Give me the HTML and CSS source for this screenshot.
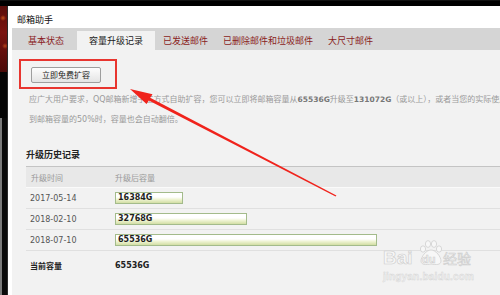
FILE: index.html
```html
<!DOCTYPE html>
<html lang="zh-CN">
<head>
<meta charset="utf-8">
<title>邮箱助手</title>
<link rel="stylesheet" href="styles.css">
</head>
<body>
<div class="page">
  <div class="topline"></div>
  <div class="main">
    <div class="sidebar">
      <div class="deco"></div>
      <div class="dark"></div>
      <div class="lower"></div>
    </div>
    <div class="panel">
      <div class="title">邮箱助手</div>
      <nav class="tabs">
        <span class="tab first">基本状态</span>
        <span class="tab active">容量升级记录</span>
        <span class="tab">已发送邮件</span>
        <span class="tab">已删除邮件和垃圾邮件</span>
        <span class="tab">大尺寸邮件</span>
      </nav>
      <div class="content">
        <button class="btn">立即免费扩容</button>
        <p class="desc">应广大用户要求，QQ邮箱新增手工方式自助扩容，您可以立即将邮箱容量从<b>65536G</b>升级至<b>131072G</b>（或以上），或者当您的实际使用量达<br>到邮箱容量的50%时，容量也会自动翻倍。</p>
        <h3 class="heading">升级历史记录</h3>
        <table class="history">
          <thead>
            <tr><th class="c1">升级时间</th><th>升级后容量</th></tr>
          </thead>
          <tbody>
            <tr><td class="c1">2017-05-14</td><td><span class="bar" style="width:68px">16384G</span></td></tr>
            <tr><td class="c1">2018-02-10</td><td><span class="bar" style="width:132px">32768G</span></td></tr>
            <tr><td class="c1">2018-07-10</td><td><span class="bar" style="width:262px">65536G</span></td></tr>
            <tr class="current"><td class="c1">当前容量</td><td>65536G</td></tr>
          </tbody>
        </table>
      </div>
    </div>
  </div>

  <div class="redbox"></div>
  <svg class="arrow" width="500" height="295" viewBox="0 0 500 295">
    <polygon points="130,89 152.5,94.2 150.2,97.8 336.4,195.6 335.6,196.4 148.8,100.4 146.5,104.0" fill="#f0231c"/>
  </svg>

  <div class="wm">
    <svg class="paw" width="26" height="26" viewBox="0 0 26 26">
      <g fill="#f7f7f7" stroke="#cfcfcf" stroke-width="0.8">
        <ellipse cx="5" cy="9" rx="2.6" ry="3.2"/>
        <ellipse cx="10" cy="4" rx="2.6" ry="3.4"/>
        <ellipse cx="16" cy="4" rx="2.6" ry="3.4"/>
        <ellipse cx="21" cy="9" rx="2.6" ry="3.2"/>
        <path d="M13 10 C8 10 3 17 3 21 C3 25 8 25 13 24 C18 25 23 25 23 21 C23 17 18 10 13 10 Z"/>
      </g>
    </svg>
    <span class="wm-bai">Bai</span><span class="wm-du">du</span><span class="wm-jy">经验</span>
    <div class="wm-url">jingyan.baidu.com</div>
  </div>
</div>
</body>
</html>
```
FILE: styles.css
```css
* { box-sizing: border-box; }
html, body { margin: 0; padding: 0; }
body {
  width: 500px;
  height: 295px;
  overflow: hidden;
  background: #000;
  font-family: "Noto Sans CJK SC", "DejaVu Sans", sans-serif;
}
.page {
  position: relative;
  width: 500px;
  height: 295px;
  overflow: hidden;
}
.topline {
  height: 6px;
  background: linear-gradient(#111 0, #111 1px, #000 1px);
}
.main {
  display: flex;
  height: 289px;
}
.sidebar {
  width: 7px;
  display: flex;
  flex-direction: column;
  border-right: 1px solid #2a2a2a;
  flex: none;
  width: 8px;
}
.deco {
  height: 66px;
  background:
    radial-gradient(circle at 3px 12px, #c0501a 0, rgba(160,40,20,0) 3px),
    radial-gradient(circle at 5px 40px, #b4421a 0, rgba(160,40,20,0) 3px),
    linear-gradient(#5a0d0a, #7a1410 40%, #4a0a08);
}
.dark { height: 46px; background: #050505; }
.lower {
  flex: 1;
  background: linear-gradient(90deg, #7a7a7a 0, #7a7a7a 2px, #0a0a0a 2px);
}
.panel {
  flex: 1;
  background: #fff;
  padding-left: 4px;
  display: flex;
  flex-direction: column;
  min-width: 0;
}
.title {
  height: 22px;
  padding: 5px 0 0 5px;
  font-size: 9px;
  line-height: 17px;
  color: #111;
}
.tabs {
  height: 22px;
  background: #d5d5d5;
  display: flex;
  white-space: nowrap;
  flex: none;
}
.tab {
  margin-top: 3px;
  height: 19px;
  line-height: 19px;
  font-size: 9px;
  color: #8a1c1c;
  padding: 0 7px 0 8px;
}
.tab.first { padding: 0 13px 0 16px; }
.tab.active {
  background: #f2f2f2;
  color: #1a1a1a;
  padding: 0 12px;
}
.content {
  flex: 1;
  background: #f2f2f2;
  padding-top: 17px;
  overflow: hidden;
}
.btn {
  display: block;
  margin: 0 0 0 19px;
  width: 70px;
  height: 16px;
  padding: 0;
  border: 1px solid #9e9e9e;
  border-radius: 2px;
  background: linear-gradient(#fdfdfd, #e4e4e4);
  font-family: "Noto Sans CJK SC", sans-serif;
  font-size: 8px;
  line-height: 14px;
  color: #222;
}
.desc {
  margin: 7px 0 0 0;
  padding-left: 17px;
  font-family: "DejaVu Sans", "Noto Sans CJK SC", sans-serif;
  font-size: 8px;
  line-height: 20px;
  color: #9a9a9a;
  white-space: nowrap;
}
.desc b { color: #777; font-size: 7.5px; }
.heading {
  margin: 17px 0 3px 14px;
  font-size: 9px;
  line-height: 16px;
  font-weight: bold;
  color: #222;
}
.history {
  margin-left: 14px;
  width: 480px;
  border-collapse: collapse;
  font-family: "DejaVu Sans", "Noto Sans CJK SC", sans-serif;
  font-size: 8px;
}
.history th {
  height: 21px;
  border-top: 1px solid #c4c4c4;
  background: #e8e8e8;
  font-weight: normal;
  text-align: left;
  color: #9a9a9a;
  padding: 0;
  font-family: "Noto Sans CJK SC", sans-serif;
}
.history th.c1 { padding-left: 5px; }
.history td {
  height: 21px;
  padding: 0;
  color: #555;
  border-bottom: 1px solid #e0e0e0;
  border-top: 1px solid #fafafa;
}
.history .c1 { width: 89px; padding-left: 4px; }
.bar {
  display: block;
  height: 12px;
  border: 1px solid #a3bb8b;
  background: linear-gradient(#ffffff 0, #ffffff 40%, #eef3d2 65%, #d2dea4 100%);
  font-weight: bold;
  color: #1f1f1f;
  font-size: 8px;
  line-height: 10px;
  padding-left: 2px;
}
.history .current td {
  height: 30px;
  border: none;
  font-weight: bold;
  color: #222;
}
.history .current td.c1 { font-family: "Noto Sans CJK SC", sans-serif; }
.redbox {
  position: absolute;
  left: 19px;
  top: 59px;
  width: 98px;
  height: 30px;
  border: 2px solid #e8352f;
}
.arrow {
  position: absolute;
  left: 0;
  top: 0;
  pointer-events: none;
}
.wm {
  position: absolute;
  left: 383px;
  top: 240px;
  width: 100px;
  height: 50px;
  font-family: "Liberation Sans", sans-serif;
  color: #f6f6f6;
}
.paw {
  position: absolute;
  left: 35px;
  top: 0;
}
.wm-bai, .wm-du, .wm-jy {
  position: absolute;
  -webkit-text-stroke: 0.6px #cdcdcd;
  font-weight: bold;
}
.wm-bai { left: 0; top: 7px; font-size: 19px; line-height: 22px; }
.wm-du { left: 39px; top: 13px; font-size: 11px; line-height: 12px; }
.wm-jy { left: 60px; top: 9px; font-size: 14px; line-height: 18px; font-family: "Noto Sans CJK SC", sans-serif; font-weight: normal; }
.wm-url {
  position: absolute;
  left: 0;
  top: 31px;
  font-size: 10px;
  letter-spacing: 0.2px;
  color: #f0f0f0;
  -webkit-text-stroke: 0.4px #d4d4d4;
  font-weight: bold;
}
```
